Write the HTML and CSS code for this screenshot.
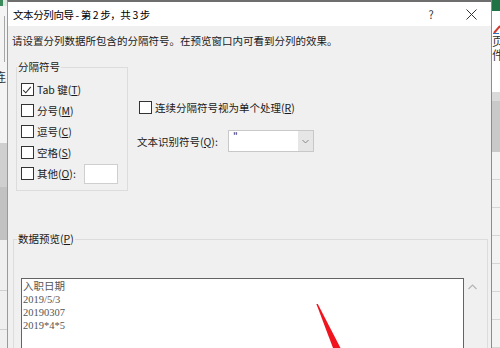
FILE: index.html
```html
<!DOCTYPE html>
<html lang="zh">
<head>
  <meta charset="UTF-8">
  <title>文本分列向导</title>
  <link rel="stylesheet" href="styles.css">
</head>
<body>
  <div class="screen">
    <!-- Excel 背景（左側） -->
    <div class="xl-left">
      <div class="xl-green"></div>
      <div class="xl-light"><span class="xl-line"></span><span class="xl-char">连</span></div>
      <div class="xl-mid"></div>
      <div class="xl-dark"></div>
      <div class="xl-rows"><span></span><span></span></div>
    </div>

    <div class="dialog">
      <div class="titlebar">
        <span class="title">文本分列向导 - 第 2 步，共 3 步</span>
        <span class="tb-btn">?</span>
        <span class="tb-btn">
          <svg width="11" height="11" viewBox="0 0 11 11"><path d="M0.5 0.5L10.5 10.5M10.5 0.5L0.5 10.5" stroke="#333" stroke-width="1" fill="none"/></svg>
        </span>
      </div>

      <div class="dlg-body">
        <p class="intro">请设置分列数据所包含的分隔符号。在预览窗口内可看到分列的效果。</p>

        <div class="delim-row">
          <fieldset class="group delims">
            <legend>分隔符号</legend>
            <label class="check">
              <span class="box"><svg width="10" height="10" viewBox="0 0 10 10"><path d="M1.2 5.2L3.8 7.8L8.8 1.8" stroke="#333" stroke-width="1.1" fill="none"/></svg></span>Tab 键(<u>T</u>)
            </label>
            <label class="check"><span class="box"></span>分号(<u>M</u>)</label>
            <label class="check"><span class="box"></span>逗号(<u>C</u>)</label>
            <label class="check"><span class="box"></span>空格(<u>S</u>)</label>
            <label class="check"><span class="box"></span>其他(<u>O</u>):<span class="other-input"></span></label>
          </fieldset>

          <div class="options">
            <label class="check consecutive"><span class="box"></span>连续分隔符号视为单个处理(<u>R</u>)</label>
            <div class="qualifier">
              <span class="q-label">文本识别符号(<u>Q</u>):</span>
              <div class="select">
                <span class="val">"</span>
                <span class="drop">
                  <svg width="7" height="5" viewBox="0 0 7 5"><path d="M0.5 1L3.5 4L6.5 1" stroke="#888" stroke-width="1" fill="none"/></svg>
                </span>
              </div>
            </div>
          </div>
        </div>

        <fieldset class="group preview">
          <legend>数据预览(<u>P</u>)</legend>
          <div class="preview-row">
            <div class="preview-box">
              <div>入职日期</div>
              <div>2019/5/3</div>
              <div>20190307</div>
              <div>2019*4*5</div>
            </div>
            <div class="scroll">
              <svg width="9" height="6" viewBox="0 0 9 6"><path d="M0.5 5L4.5 1L8.5 5" stroke="#b5b5b5" stroke-width="1.2" fill="none"/></svg>
            </div>
          </div>
        </fieldset>
      </div>

      <!-- 紅色標註箭頭 -->
      <svg class="mark" width="34" height="44" viewBox="0 0 34 44"><polygon points="0.4,0 1.8,0 24.5,44 17,44" fill="#f0141e"/></svg>
    </div>

    <!-- Excel 背景（右側） -->
    <div class="xl-right">
      <div class="xr-green"></div>
      <div class="xr-white">
        <svg class="xr-icon" width="8" height="10" viewBox="0 0 8 10"><path d="M1 9L7 2" stroke="#d23b2f" stroke-width="2"/><path d="M0 9.5H6" stroke="#2f6fc0" stroke-width="1"/></svg>
        <span class="xr-char">页</span>
        <span class="xr-char">件</span>
      </div>
      <div class="xr-band"></div>
      <div class="xr-dark"></div>
      <div class="xr-rows"><span></span><span></span><span></span><span></span><span></span><span></span><span></span></div>
    </div>
  </div>
</body>
</html>
```

FILE: styles.css
```css
body {
  margin: 0;
  font-family: "Noto Sans CJK SC", sans-serif;
  font-size: 10.5px;
  color: #1a1a1a;
  background: #e8e8e8;
}
.screen {
  display: flex;
  width: 500px;
  height: 348px;
  overflow: hidden;
}

/* Excel background strips */
.xl-left {
  width: 7px;
  display: flex;
  flex-direction: column;
  background: #ececec;
}
.xl-green {
  height: 6px;
  background: linear-gradient(90deg, #3d8a5c 0 3px, #dfe9e2 3px);
}
.xl-light {
  height: 137px;
  background: #f4f4f4;
  position: relative;
  overflow: hidden;
}
.xl-line {
  position: absolute;
  left: 4px;
  top: 10px;
  width: 1px;
  height: 46px;
  background: #a8a8a8;
}
.xl-char {
  position: absolute;
  left: -6px;
  top: 62px;
  font-size: 12px;
  color: #333;
}
.xl-mid {
  height: 44px;
  background: #cfcfcf;
}
.xl-dark {
  height: 53px;
  background: #c2c2c2;
}
.xl-rows {
  flex: 1;
  background: #efefef;
  display: flex;
  flex-direction: column;
  gap: 38px;
  padding-top: 50px;
}
.xl-rows span {
  height: 1px;
  background: #d0d0d0;
}

.xl-right {
  width: 8px;
  display: flex;
  flex-direction: column;
  border-left: 1px solid #8c8c8c;
  background: #f3f3f3;
}
.xr-green {
  height: 12px;
  background: #217346;
}
.xr-white {
  height: 76px;
  background: #fff;
  display: flex;
  flex-direction: column;
  overflow: hidden;
  padding-top: 13px;
}
.xr-icon {
  margin-left: 1px;
}
.xr-char {
  font-size: 12px;
  line-height: 14px;
  color: #333;
}
.xr-band {
  height: 10px;
  background: #dadada;
}
.xr-dark {
  height: 57px;
  background: #c9c9c9;
}
.xr-rows {
  flex: 1;
  display: flex;
  flex-direction: column;
  gap: 27px;
  padding-top: 27px;
}
.xr-rows span {
  height: 1px;
  background: #d6d6d6;
}

/* dialog */
.dialog {
  position: relative;
  width: 484px;
  border-top: 2px solid #6e6e6e;
  border-left: 1px solid #9a9a9a;
  background: #f0f0f0;
  overflow: hidden;
}
.titlebar {
  height: 24px;
  background: #fff;
  display: flex;
  align-items: center;
}
.title {
  flex: 1;
  padding-left: 5px;
  font-size: 10.5px;
  letter-spacing: -0.4px;
  color: #000;
}
.tb-btn {
  width: 40px;
  text-align: center;
  font-size: 11px;
  color: #333;
  display: flex;
  justify-content: center;
  align-items: center;
}

.intro {
  margin: 8px 0 0 4px;
  line-height: 14px;
}

.delim-row {
  display: flex;
  margin-top: 12px;
}
.group {
  margin: 0;
  border: 1px solid #dcdcdc;
  min-width: 0;
}
.group legend {
  line-height: 14px;
  padding: 0 1px;
  margin-left: -4px;
}
.delims {
  margin-left: 8px;
  width: 112px;
  box-sizing: border-box;
  padding: 5px 0 6px 4px;
}
.check {
  display: flex;
  align-items: center;
  height: 21px;
  white-space: nowrap;
}
.box {
  width: 11px;
  height: 11px;
  border: 1px solid #333;
  background: #fff;
  margin-right: 3px;
  display: flex;
  align-items: center;
  justify-content: center;
}
.other-input {
  width: 34px;
  height: 20px;
  box-sizing: border-box;
  border: 1px solid #cfcfcf;
  background: #fff;
  margin-left: 8px;
}

.options {
  margin-left: 9px;
  padding-top: 39px;
}
.consecutive {
  height: 16px;
  margin-left: 2px;
}
.qualifier {
  display: flex;
  align-items: center;
  margin-top: 15px;
}
.q-label {
  width: 91px;
  white-space: nowrap;
}
.select {
  width: 86px;
  height: 22px;
  box-sizing: border-box;
  border: 1px solid #c8c8c8;
  background: #fff;
  display: flex;
}
.val {
  flex: 1;
  padding-left: 4px;
  font-size: 10px;
  line-height: 12px;
}
.drop {
  width: 15px;
  background: #e6e6e6;
  display: flex;
  align-items: center;
  justify-content: center;
}

.preview {
  margin: 41px 0 0 5px;
  width: 475px;
  height: 160px;
  box-sizing: border-box;
  padding: 32px 0 0 7px;
}
.preview-row {
  display: flex;
}
.preview-box {
  width: 443px;
  height: 120px;
  box-sizing: border-box;
  border: 1px solid #646464;
  background: #fff;
  padding: 1px 0 0 1px;
  font-family: "Liberation Serif", "Noto Sans CJK SC", serif;
  font-size: 10.5px;
  line-height: 13px;
  color: #555;
}
.scroll {
  width: 18px;
  padding-top: 6px;
  display: flex;
  justify-content: center;
  align-items: flex-start;
}

.mark {
  position: absolute;
  left: 308px;
  top: 302px;
}
```
